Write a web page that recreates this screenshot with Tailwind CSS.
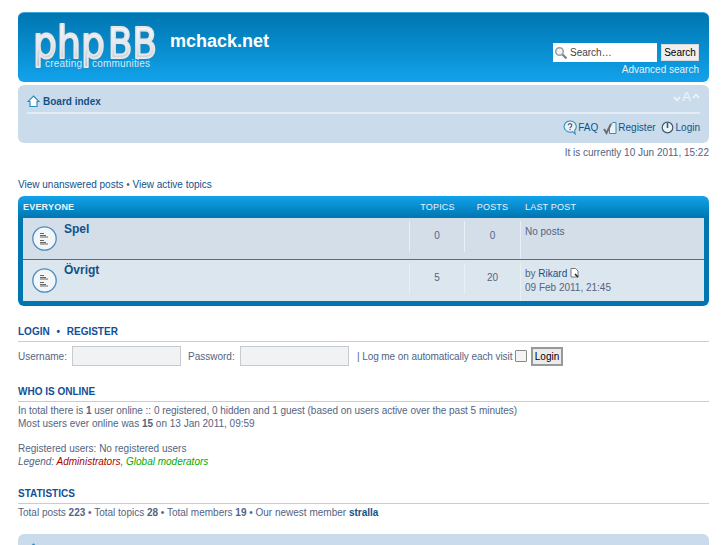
<!DOCTYPE html>
<html lang="en">
<head>
  <meta charset="UTF-8" />
  <title>mchack.net - Index page</title>
  <script src="https://cdn.jsdelivr.net/npm/@tailwindcss/browser@4"></script>
</head>
<body class="bg-white font-['Liberation_Sans',Arial,sans-serif] text-[10px] leading-[13px] text-[#536482]">
  <div class="h-[545px] overflow-hidden px-[18px] pt-[12px]">

    <!-- headerbar -->
    <header class="h-[70px] rounded-[6px] bg-gradient-to-b from-[#0076b1] to-[#12a3eb] border-t border-[#3aa6dc] flex justify-between">
      <div class="flex">
        <svg class="ml-[12px] mt-[9px] w-[128px] h-[54px] overflow-visible" viewBox="0 0 128 54">
          <defs>
            <linearGradient id="logoFill" x1="0" y1="0" x2="0" y2="1">
              <stop offset="0" stop-color="#ffffff" />
              <stop offset="0.55" stop-color="#e4e8ec" />
              <stop offset="1" stop-color="#b4bec6" />
            </linearGradient>
          </defs>
          <g class="drop-shadow-[0_0_1px_#3f7da3]" font-family="DejaVu Sans" fill="url(#logoFill)" stroke="#e4e8ec" stroke-width="2" stroke-linejoin="round">
            <text x="3" y="36" font-size="45" textLength="72" lengthAdjust="spacingAndGlyphs">php</text>
            <text x="78" y="36" font-size="43" textLength="49" lengthAdjust="spacingAndGlyphs">BB</text>
          </g>
          <g font-family="Liberation Sans" font-size="10" fill="#d6e9f6">
            <text x="15" y="45" textLength="37">creating</text>
            <text x="62" y="45" textLength="58">communities</text>
          </g>
        </svg>
        <h1 class="ml-[12px] mt-[18px] text-[18px] leading-[21px] font-bold text-white">mchack.net</h1>
      </div>
      <div class="mr-[10px] mt-[30px] flex flex-col items-end">
        <div class="flex items-start gap-[4px]">
          <div class="w-[104px] h-[19px] bg-white flex items-center">
            <svg class="ml-[1px] w-[14px] h-[14px]" viewBox="0 0 14 14" fill="none">
              <circle cx="5.5" cy="5.5" r="3.8" stroke="#9a9fa4" stroke-width="1.5" fill="#eef2f5" />
              <path d="M8.5 8.5L12.5 12.5" stroke="#7a7f84" stroke-width="2.2" />
            </svg>
            <span class="ml-[2px] text-[#444]">Search…</span>
          </div>
          <button class="mt-[1px] h-[17px] w-[38px] bg-[#efefef] border border-[#d9d9d9] text-[10px] text-black">Search</button>
        </div>
        <a class="mt-[1px] text-[#e3f1fa]">Advanced search</a>
      </div>
    </header>

    <!-- navbar -->
    <nav class="mt-[3px] h-[58px] rounded-[6px] bg-[#cadceb] px-[9px]">
      <div class="h-[29px] border-b-2 border-[#e3ecf4] flex justify-between items-start">
        <a class="mt-[10px] flex items-center font-bold text-[#105289]">
          <svg class="w-[13px] h-[13px] mr-[3px]" viewBox="0 0 13 13" fill="#fff" stroke="#2e8dbf" stroke-width="1.2"><path d="M6.5 1L12 6.5H10V11.5H3V6.5H1Z" /></svg>
          Board index
        </a>
        <div class="mt-[5px] flex items-center">
          <svg class="w-[8px] h-[6px] mt-[3px]" viewBox="0 0 8 6" fill="none" stroke="#f4f8fb" stroke-width="1.3"><path d="M1 1L4 4.5L7 1" /></svg>
          <span class="text-[13px] leading-[14px] text-[#f0f5f9] mx-[1px]">A</span>
          <svg class="w-[8px] h-[6px] mb-[3px]" viewBox="0 0 8 6" fill="none" stroke="#f4f8fb" stroke-width="1.3"><path d="M1 5L4 1.5L7 5" /></svg>
        </div>
      </div>
      <div class="mt-[6px] flex justify-end items-center text-[#105289]">
        <svg class="w-[14px] h-[15px]" viewBox="0 0 14 15" fill="#eaf2f8" stroke="#3c8cb8" stroke-width="1.1"><path d="M7 1a6 5.6 0 1 0 2.6 10.7l2.6 2.3l-.6-3.6A6 5.6 0 0 0 7 1Z" /><path d="M5.2 5.2a1.8 1.7 0 1 1 2.6 1.7c-.5.3-.8.6-.8 1.3" fill="none" stroke="#3d5a70" /><path d="M7 9v1.3" stroke="#3d5a70" /></svg>
        <span class="ml-[1px]">FAQ</span>
        <svg class="ml-[5px] w-[14px] h-[14px]" viewBox="0 0 14 14" fill="none"><path d="M7 4L10 1.5H13V12.5H6.5V7Z" fill="#eaf2f8" stroke="#3c8cb8" /><path d="M1 8L3.5 12L8 3" stroke="#6a6f74" stroke-width="2" /></svg>
        <span class="ml-[1px]">Register</span>
        <svg class="ml-[5px] w-[13px] h-[13px]" viewBox="0 0 13 13" fill="none" stroke="#3d5a70" stroke-width="1.2"><circle cx="6.5" cy="6.5" r="5.3" fill="#eaf2f8" /><path d="M6.5 2V7" stroke-width="1.6" /></svg>
        <span class="ml-[2px]">Login</span>
      </div>
    </nav>

    <p class="mt-[3px] text-right">It is currently 10 Jun 2011, 15:22</p>

    <p class="mt-[19px] text-[#105289]">View unanswered posts <span class="text-[#536482]">•</span> View active topics</p>

    <!-- forum list -->
    <section class="mt-[5px] rounded-[6px] bg-gradient-to-b from-[#12a3eb] to-[#0076b1] to-20% bg-[#0076b1] px-[5px] pb-[5px]">
      <div class="h-[22px] pt-[1px] flex items-center text-[9px] tracking-[0.2px] text-[#e8f5fc]">
        <span class="w-[387px] font-bold">EVERYONE</span>
        <span class="w-[55px] text-center">TOPICS</span>
        <span class="w-[55px] text-center">POSTS</span>
        <span class="pl-[5px]">LAST POST</span>
      </div>
      <div class="h-[42px] flex bg-[#d3dee9] border-b border-[#2b7aa8]">
        <div class="w-[386px] flex">
          <svg class="ml-[9px] mt-[8px] w-[25px] h-[25px]" viewBox="0 0 25 25">
            <circle cx="12.5" cy="12.5" r="11.7" fill="#f3f5f6" stroke="#4a8cc0" stroke-width="1.3" />
            <path d="M8 7.5h4M8 9.5h6M8 11h8M8 14.5h4M8 16.5h6M8 18h8" stroke="#666" stroke-width="1.1" />
          </svg>
          <a class="ml-[7px] mt-[4px] text-[12px] leading-[14px] font-bold text-[#105289]">Spel</a>
        </div>
        <div class="mt-[3px] mb-[7px] w-[55px] border-l border-[#e8eff5] pt-[8px] text-center">0</div>
        <div class="mt-[3px] mb-[7px] w-[56px] border-l border-[#e8eff5] pt-[8px] text-center">0</div>
        <div class="mt-[3px] flex-1 border-l border-[#e8eff5] pl-[4px] pt-[4px]">No posts</div>
      </div>
      <div class="h-[41px] flex bg-[#dce6ef]">
        <div class="w-[386px] flex">
          <svg class="ml-[9px] mt-[8px] w-[25px] h-[25px]" viewBox="0 0 25 25">
            <circle cx="12.5" cy="12.5" r="11.7" fill="#f3f5f6" stroke="#4a8cc0" stroke-width="1.3" />
            <path d="M8 7.5h4M8 9.5h6M8 11h8M8 14.5h4M8 16.5h6M8 18h8" stroke="#666" stroke-width="1.1" />
          </svg>
          <a class="ml-[7px] mt-[3px] text-[12px] leading-[14px] font-bold text-[#105289]">Övrigt</a>
        </div>
        <div class="mt-[3px] mb-[7px] w-[55px] border-l border-[#e8eff5] pt-[8px] text-center">5</div>
        <div class="mt-[3px] mb-[7px] w-[56px] border-l border-[#e8eff5] pt-[8px] text-center">20</div>
        <div class="mt-[3px] flex-1 border-l border-[#e8eff5] pl-[4px] pt-[4px] leading-[14px]">
          by <a class="text-[#105289]">Rikard</a>
          <svg class="inline w-[9px] h-[10px] align-[-1px]" viewBox="0 0 9 10" fill="#fff" stroke="#777"><path d="M1 .5H5.5L8 3V9H1Z" /><path d="M5 6l3 3" stroke="#222" stroke-width="1.5" /></svg>
          <br />09 Feb 2011, 21:45
        </div>
      </div>
    </section>

    <!-- login -->
    <h3 class="mt-[19px] font-bold text-[#115098] pb-[3px] border-b border-[#ccc]">LOGIN <span class="mx-[4px]">•</span> REGISTER</h3>
    <div class="mt-[4px] flex items-center">
      <label class="w-[49px]">Username:</label>
      <div class="ml-[5px] w-[109px] h-[20px] bg-[#f0f2f4] border border-[#c7cbcf]"></div>
      <label class="ml-[7px] w-[47px]">Password:</label>
      <div class="ml-[5px] w-[109px] h-[20px] bg-[#f0f2f4] border border-[#c7cbcf]"></div>
      <span class="ml-[8px] w-[156px] whitespace-nowrap tracking-[-0.08px]">| Log me on automatically each visit</span>
      <div class="ml-[2px] w-[12px] h-[12px] bg-[#f4f4f4] border border-[#888] rounded-[1px]"></div>
      <button class="ml-[4px] w-[32px] h-[19px] bg-[#ebebeb] border-2 border-[#999] text-black text-[10px]">Login</button>
    </div>

    <!-- who is online -->
    <h3 class="mt-[19px] font-bold text-[#115098] pb-[3px] border-b border-[#ccc]">WHO IS ONLINE</h3>
    <p class="mt-[2px] tracking-[-0.025px]">In total there is <b>1</b> user online :: 0 registered, 0 hidden and 1 guest (based on users active over the past 5 minutes)</p>
    <p>Most users ever online was <b>15</b> on 13 Jan 2011, 09:59</p>
    <p class="mt-[12px]">Registered users: No registered users</p>
    <p><em>Legend: <span class="text-[#aa0000]">Administrators</span>, <span class="text-[#00aa00]">Global moderators</span></em></p>

    <!-- statistics -->
    <h3 class="mt-[19px] font-bold text-[#115098] pb-[3px] border-b border-[#ccc]">STATISTICS</h3>
    <p class="mt-[2px]">Total posts <b>223</b> • Total topics <b>28</b> • Total members <b>19</b> • Our newest member <b class="text-[#105289]">stralla</b></p>

    <!-- bottom navbar -->
    <nav class="mt-[15px] h-[40px] rounded-[6px] bg-[#cadceb] px-[9px] pt-[9px] flex justify-between text-[#105289]">
      <svg class="w-[13px] h-[13px]" viewBox="0 0 13 13" fill="#fff" stroke="#2e8dbf" stroke-width="1.2"><path d="M6.5 1L12 6.5H10V11.5H3V6.5H1Z" /></svg>
      <span>The team • Delete all board cookies • All times are UTC + 1 hour [ DST ]</span>
    </nav>
  </div>
</body>
</html>
